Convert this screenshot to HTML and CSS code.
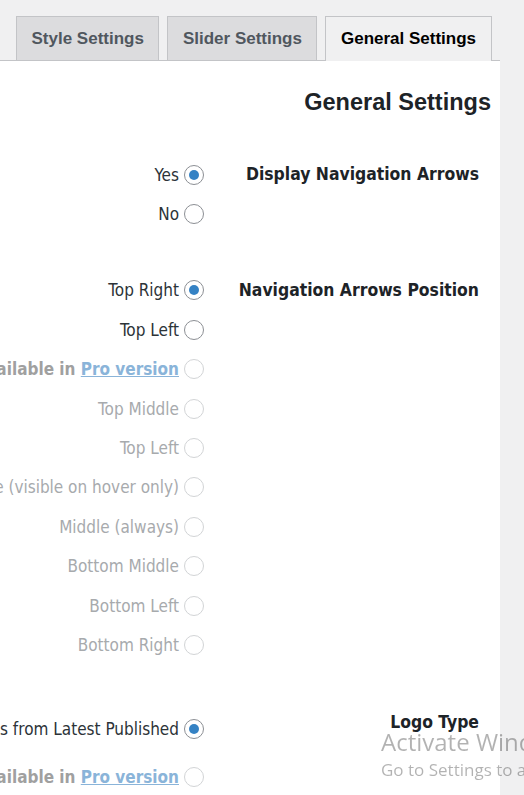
FILE: index.html
```html
<!DOCTYPE html>
<html lang="en">
<head>
<meta charset="utf-8">
<title>General Settings</title>
<link rel="stylesheet" href="styles.css">
</head>
<body>
<nav class="tabs">
  <a class="tab">Style Settings</a>
  <a class="tab">Slider Settings</a>
  <a class="tab tab-active">General Settings</a>
</nav>
<main class="panel">
  <h2 class="panel-title">General Settings</h2>

  <section class="setting">
    <div class="options">
      <label class="opt"><span>Yes</span><span class="radio checked"></span></label>
      <label class="opt"><span>No</span><span class="radio"></span></label>
    </div>
    <div class="setting-label">Display Navigation Arrows</div>
  </section>

  <section class="setting setting-position">
    <div class="options">
      <label class="opt"><span>Top Right</span><span class="radio checked"></span></label>
      <label class="opt"><span>Top Left</span><span class="radio"></span></label>
      <label class="opt opt-pro"><span>Only Available in <a class="pro-link">Pro version</a></span><span class="radio radio-off"></span></label>
      <label class="opt opt-off"><span>Top Middle</span><span class="radio radio-off"></span></label>
      <label class="opt opt-off"><span>Top Left</span><span class="radio radio-off"></span></label>
      <label class="opt opt-off"><span>Middle (visible on hover only)</span><span class="radio radio-off"></span></label>
      <label class="opt opt-off"><span>Middle (always)</span><span class="radio radio-off"></span></label>
      <label class="opt opt-off"><span>Bottom Middle</span><span class="radio radio-off"></span></label>
      <label class="opt opt-off"><span>Bottom Left</span><span class="radio radio-off"></span></label>
      <label class="opt opt-off"><span>Bottom Right</span><span class="radio radio-off"></span></label>
    </div>
    <div class="setting-label">Navigation Arrows Position</div>
  </section>

  <section class="setting setting-logo">
    <div class="options">
      <label class="opt"><span>Use Images from Latest Published</span><span class="radio checked"></span></label>
      <label class="opt opt-pro opt-spaced"><span>Only Available in <a class="pro-link">Pro version</a></span><span class="radio radio-off"></span></label>
    </div>
    <div class="setting-label">Logo Type</div>
  </section>
</main>

<div class="watermark">
  <div class="wm-title">Activate Windows</div>
  <div class="wm-sub">Go to Settings to activate Windows.</div>
</div>
</body>
</html>
```

FILE: styles.css
```css
html, body {
  margin: 0;
  padding: 0;
  height: 100%;
  overflow: hidden;
}

body {
  background: #f0f0f1;
  font-family: "Liberation Sans", Arial, sans-serif;
  color: #1d2327;
}

.tabs {
  display: flex;
  gap: 8px;
  width: 500px;
  box-sizing: border-box;
  padding: 16px 0 0 16px;
  border-bottom: 1px solid #c3c4c7;
}

.tab {
  display: block;
  height: 43px;
  line-height: 43px;
  padding: 0 14.5px;
  border: 1px solid #c3c4c7;
  border-bottom: none;
  background: #dcdcde;
  color: #50575e;
  font-weight: bold;
  font-size: 17px;
  white-space: nowrap;
}

.tab-active {
  background: #f0f0f1;
  color: #000;
  margin-bottom: -1px;
  height: 44px;
}

.panel {
  width: 500px;
  height: 100%;
  box-sizing: border-box;
  background: #fff;
  padding: 26px 9px 0 0;
}

.panel-title {
  margin: 0 0 38px 0;
  text-align: right;
  font-size: 23.5px;
  line-height: 30px;
  font-weight: bold;
  color: #1d2327;
}

.setting {
  display: flex;
  align-items: flex-start;
  padding-right: 12px;
}

.setting-position {
  margin-top: 37px;
}

.setting-logo {
  margin-top: 45px;
}

.options {
  width: 204px;
  flex: none;
  display: flex;
  flex-direction: column;
  align-items: flex-end;
}

.opt {
  display: flex;
  align-items: center;
  justify-content: flex-end;
  gap: 5px;
  height: 39.4px;
  white-space: nowrap;
  font-family: "DejaVu Sans Condensed", "DejaVu Sans", sans-serif;
  font-stretch: condensed;
  font-size: 17px;
  color: #2c3338;
}

.opt-spaced {
  margin-top: 8.6px;
}

.opt-off {
  color: #a7aaad;
}

.opt-pro {
  color: #a0a0a0;
  font-weight: bold;
}

.pro-link {
  color: #8ab4d9;
  text-decoration: underline;
}

.radio {
  display: inline-flex;
  align-items: center;
  justify-content: center;
  width: 18px;
  height: 18px;
  flex: none;
  border: 1px solid #8c8f94;
  border-radius: 50%;
  background: #fff;
  box-sizing: content-box;
}

.radio-off {
  border-color: #d2d4d6;
}

.radio.checked::after {
  content: "";
  width: 10px;
  height: 10px;
  border-radius: 50%;
  background: #3582c4;
}

.setting-label {
  flex: 1;
  text-align: right;
  height: 39.4px;
  line-height: 39.4px;
  font-family: "DejaVu Sans Condensed", "DejaVu Sans", sans-serif;
  font-stretch: condensed;
  font-weight: bold;
  font-size: 17.4px;
  color: #1d2327;
  white-space: nowrap;
}

.setting-logo .setting-label {
  margin-top: -7px;
}

.watermark {
  position: fixed;
  left: 381px;
  top: 725px;
  white-space: nowrap;
  color: rgba(0, 0, 0, 0.3);
  font-family: "Open Sans", "Noto Sans", sans-serif;
  pointer-events: none;
}

.wm-title {
  font-size: 24px;
  line-height: 33px;
}

.wm-sub {
  font-size: 17px;
  line-height: 22px;
  margin-top: 1px;
}
```
